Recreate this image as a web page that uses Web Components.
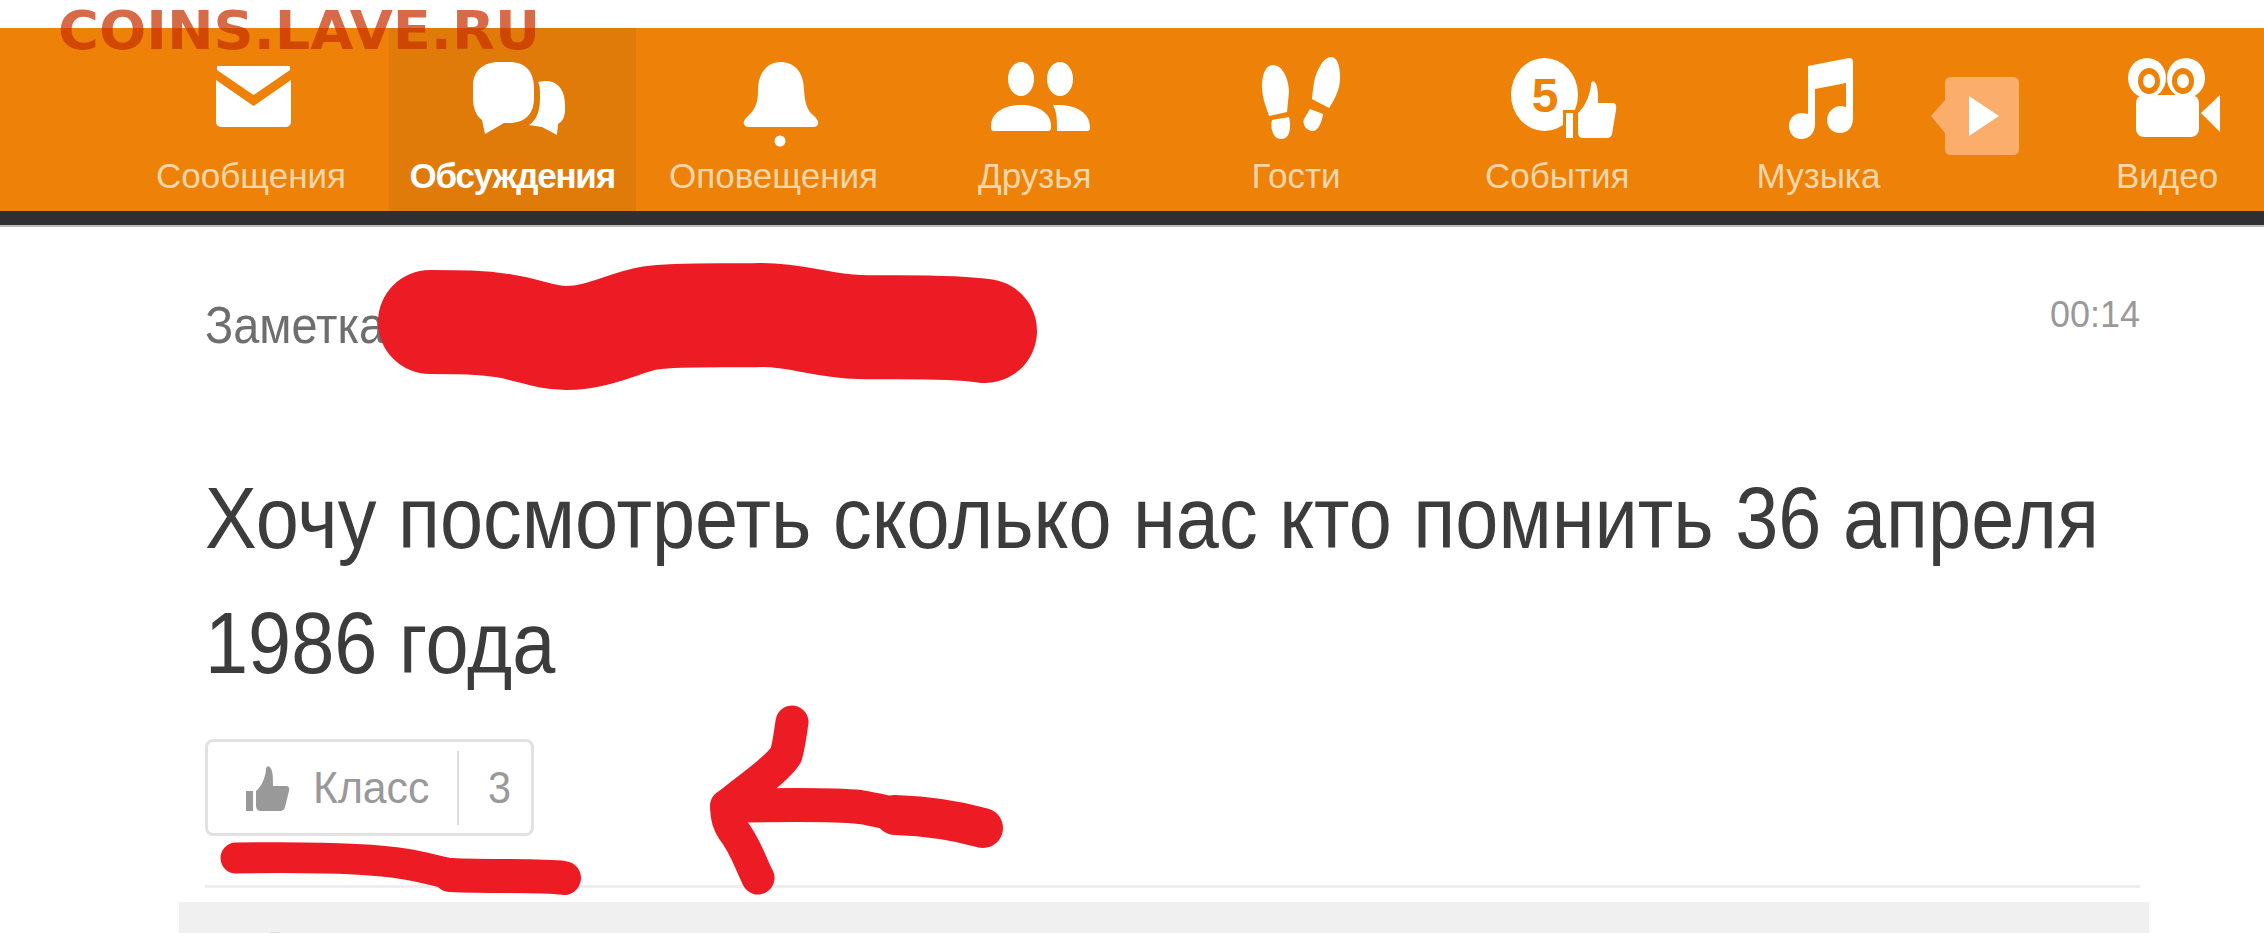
<!doctype html>
<html lang="ru">
<head>
<meta charset="utf-8">
<title>Заметка</title>
<style>
  html,body{ margin:0; background:#fff; overflow:hidden }
  body{ font-family:"Liberation Sans", Arial, sans-serif }
</style>
</head>
<body>
<ok-page>
  <ok-toolbar>
    <ok-tab label="Сообщения">
      <svg viewBox="191 55 120 92"><path d="M217 66H290V70L253.500 95L217 70Z"/><path d="M216 80L253.500 106L291 80V121q0 6-6 6H222q-6 0-6-6Z"/></svg>
    </ok-tab>
    <ok-tab label="Обсуждения" active>
      <svg viewBox="453 55 120 92"><path d="M500 62H510C527 62 535 72 535 88V98C535 114 526 123 510 123H505L486 134L483 120C477 116 474 108 474 98V86C474 71 484 62 500 62Z"/><path d="M545 81C559 80 566 91 566 104V110C566 117 563 122 559 124L558 135L543 127L530 125C538 120 541 110 541 98C541 90 541 85 539 82Z"/></svg>
    </ok-tab>
    <ok-tab label="Оповещения">
      <svg viewBox="713 55 120 92"><path d="M780 62C796 62 803 76 803 90C804 104 806 110 813 116L815 118Q818 122 817 124Q816 127 812 127H748Q744 127 743 124Q742 121 745 118C754 110 757 104 757 90C757 76 764 62 780 62Z"/><ellipse cx="779" cy="141" rx="5.500" ry="5.500"/></svg>
    </ok-tab>
    <ok-tab label="Друзья">
      <svg viewBox="974 55 120 92"><ellipse cx="1020" cy="79" rx="13" ry="17"/><ellipse cx="1059" cy="79" rx="13" ry="17"/><path d="M990 126C990 113 1003 105 1020 105C1037 105 1050 113 1050 126V128Q1050 131 1047 131H993Q990 131 990 128Z"/><path d="M1052 105C1075 104 1089 112 1089 128Q1089 131 1086 131H1056C1056 120 1056 112 1052 105Z"/></svg>
    </ok-tab>
    <ok-tab label="Гости">
      <svg viewBox="1236 55 120 92"><path d="M1273 65C1283 65 1289 80 1289 92L1287 112L1269 116C1266 106 1262 98 1262 86C1262 74 1266 65 1273 65Z"/><path d="M1272 120L1289 117C1291 125 1291 139 1281 139C1273 139 1270 128 1272 120Z"/><path d="M1331 57C1338 57 1340 68 1340 78C1340 90 1334 100 1329 108L1312 99C1313 88 1314 78 1318 70C1322 62 1326 57 1331 57Z"/><path d="M1310 109L1323 114C1322 122 1318 131 1313 131C1306 131 1302 124 1304 119Z"/></svg>
    </ok-tab>
    <ok-tab label="События">
      <svg viewBox="1496 55 120 92"><ellipse cx="1543.500" cy="94.500" rx="33.500" ry="36.500"/><text x="1544" y="112" text-anchor="middle" font-size="48" font-weight="700" fill="#ee8208">5</text><rect x="1565" y="113" width="7" height="25" stroke="#ee8208" stroke-width="6" paint-order="stroke"/><path stroke="#ee8208" stroke-width="6" paint-order="stroke" d="M1592 81C1597 83 1597 92 1597 103H1612Q1616 103 1615 110L1611 134Q1610 138 1606 138H1582Q1577 138 1577 132V113C1585 106 1590 92 1590 83Z"/></svg>
    </ok-tab>
    <ok-tab label="Музыка">
      <svg viewBox="1758 55 120 92"><path d="M1807 66L1848 58Q1852 58 1852 62V118C1852 128 1846 133 1839 133C1831 133 1826 127 1826 120C1826 112 1833 106 1840 106L1845 107V83L1814 89V124C1814 133 1808 139 1800 139C1793 139 1788 133 1788 126C1788 118 1794 113 1801 113L1807 114Z"/></svg>
    </ok-tab>
    <ok-promo></ok-promo>
    <ok-tab label="Видео">
      <svg viewBox="2106 55 120 92"><ellipse cx="2146" cy="78" rx="19" ry="20"/><ellipse cx="2185" cy="78" rx="19" ry="20"/><ellipse cx="2148" cy="81" rx="11" ry="13" fill="#ee8208"/><ellipse cx="2182" cy="81" rx="11" ry="13" fill="#ee8208"/><ellipse cx="2148" cy="81" rx="6" ry="7"/><ellipse cx="2182" cy="81" rx="6" ry="7"/><rect x="2135" y="95" width="63" height="42" rx="8"/><path d="M2200 113L2219 95V132Z"/></svg>
    </ok-tab>
  </ok-toolbar>
  <ok-note when="00:14">Хочу посмотреть сколько нас кто помнить 36 апреля 1986 года</ok-note>
</ok-page>

<script>
class OkTab extends HTMLElement {
  constructor(){
    super();
    const r = this.attachShadow({mode:'open'});
    r.innerHTML = `
      <style>
        :host{ flex:none; width:247px; height:183px; display:flex; flex-direction:column; align-items:center; padding-top:27px; box-sizing:border-box }
        :host([active]){ background:#e07b0a }
        ::slotted(svg){ width:120px; height:92px; display:block; fill:#fff; overflow:visible }
        .t{ margin-top:9px; font-size:35px; line-height:40px; color:#fbd6a8; white-space:nowrap }
        :host([active]) .t{ color:#fff; font-weight:700; letter-spacing:-1.200px }
      </style>
      <slot></slot>
      <span class="t"></span>`;
    r.querySelector('.t').textContent = this.getAttribute('label');
  }
}
customElements.define('ok-tab', OkTab);

class OkPromo extends HTMLElement {
  constructor(){
    super();
    this.attachShadow({mode:'open'}).innerHTML = `
      <style>
        :host{ flex:none; width:88px; height:78px; margin:49px 10.500px 0 -25.500px; display:block }
        svg{ display:block; width:88px; height:78px }
      </style>
      <svg viewBox="1930 77 88 78"><path fill="#fbae6b" d="M1950 77H2012q6 0 6 6V149q0 6-6 6H1950q-6 0-6-6V133L1930 116L1944 100V83q0-6 6-6Z"/><path fill="#fff" d="M1968 96L1998 116L1968 136Z"/></svg>`;
  }
}
customElements.define('ok-promo', OkPromo);

class OkToolbar extends HTMLElement {
  constructor(){
    super();
    this.attachShadow({mode:'open'}).innerHTML = `
      <style>
        :host{ display:flex; gap:14.250px; height:183px; padding-left:127.500px; margin-top:28px; background:#ee8208;
          border-bottom:14px solid #2f2f33; box-shadow:0 2px 0 #bbb; overflow:hidden }
      </style>
      <slot></slot>`;
  }
}
customElements.define('ok-toolbar', OkToolbar);

class OkLike extends HTMLElement {
  constructor(){
    super();
    this.attachShadow({mode:'open'}).innerHTML = `
      <style>
        :host{ display:inline-flex; align-items:center; box-sizing:border-box; width:329px; height:97px; border:3px solid #e2e2e2; border-radius:8px;
          color:#999; font-size:45px; padding-left:38px }
        svg{ width:44px; height:48px; fill:#999; flex:none }
        .l{ margin-left:23px; width:146px; height:74px; line-height:74px; border-right:2px solid #ddd; box-sizing:border-box }
        .l span{ display:inline-block; transform:scaleX(.95); transform-origin:0 50% }
        .n{ margin-left:28px; transform:scaleX(.92) }
      </style>
      <svg viewBox="248 760 44 48"><rect x="248" y="787" width="7" height="20"/><path d="M270 762C275 764 275 772 275 782H288Q292 782 291 787L287 803Q286 807 282 807H263Q258 807 258 802V787C264 782 268 772 268 764Z"/></svg>
      <span class="l"><span>Класс</span></span><span class="n">3</span>`;
  }
}
customElements.define('ok-like', OkLike);

class OkNote extends HTMLElement {
  constructor(){
    super();
    const r = this.attachShadow({mode:'open'});
    r.innerHTML = `
      <style>
        :host{ display:block; padding:72px 124px 0 205px }
        .head{ display:flex; justify-content:space-between; align-items:center; height:50px }
        .kind{ font-size:52px; color:#6e6e6e; margin-top:5px; transform:scaleX(.9); transform-origin:0 50% }
        .when{ font-size:36px; color:#999; margin-bottom:14px }
        .title{ margin:108px 0 0; width:2150px; font-size:87px; line-height:125px; font-weight:400; color:#3c3c3c;
          transform:scaleX(.891); transform-origin:0 0 }
        .foot{ margin-top:34px; height:149px; border-bottom:3px solid #eee; box-sizing:border-box }
        .more{ margin:14px -9px 0 -26px; height:60px;
          background:linear-gradient(#dcdcdc,#dcdcdc) 91px 30px/10px 2px no-repeat #f0f0f0 }
      </style>
      <div class="head"><span class="kind">Заметка</span><span class="when"></span></div>
      <h1 class="title"><slot></slot></h1>
      <div class="foot"><ok-like></ok-like></div>
      <div class="more"></div>`;
    r.querySelector('.when').textContent = this.getAttribute('when');
  }
}
customElements.define('ok-note', OkNote);

class OkPage extends HTMLElement {
  constructor(){
    super();
    this.attachShadow({mode:'open'}).innerHTML = `
      <style>
        :host{ display:block; position:relative; height:933px; overflow:hidden; font-family:"Liberation Sans", Arial, sans-serif }
        .mark{ position:absolute; left:58px; top:0; font:700 53px "DejaVu Sans", sans-serif; color:rgba(200,50,0,.72); white-space:nowrap;
          transform:scaleX(1.051); transform-origin:0 0 }
        .ink{ position:absolute; inset:0; width:2264px; height:933px; pointer-events:none }
        .ink path{ fill:none; stroke:#ed1c24; stroke-linecap:round; stroke-linejoin:round }
      </style>
      <slot></slot>
      <div class="mark">COINS.LAVE.RU</div>
      <svg class="ink" viewBox="0 0 2264 933">
        <path stroke-width="104" d="M430 322C460 322 480 322 505 326C530 330 545 338 566 338C600 338 625 322 650 318C680 314 720 316 761 315C800 315 820 326 860 327C900 328 950 326 985 331"/>
        <path stroke-width="31" d="M236 858C300 857 370 858 405 864C430 868 440 873 460 875"/>
        <path stroke-width="34" d="M450 875C500 877 540 875 564 878"/>
        <path stroke-width="33" d="M792 722C790 735 789 745 786 755C775 772 745 790 727 806C726 815 728 822 733 830C745 845 750 862 758 878"/>
        <path stroke-width="34" d="M727 806C770 805 830 804 860 807C880 810 890 814 905 816"/>
        <path stroke-width="40" d="M895 815C925 816 955 820 983 828"/>
      </svg>`;
  }
}
customElements.define('ok-page', OkPage);
</script>
</body>
</html>
